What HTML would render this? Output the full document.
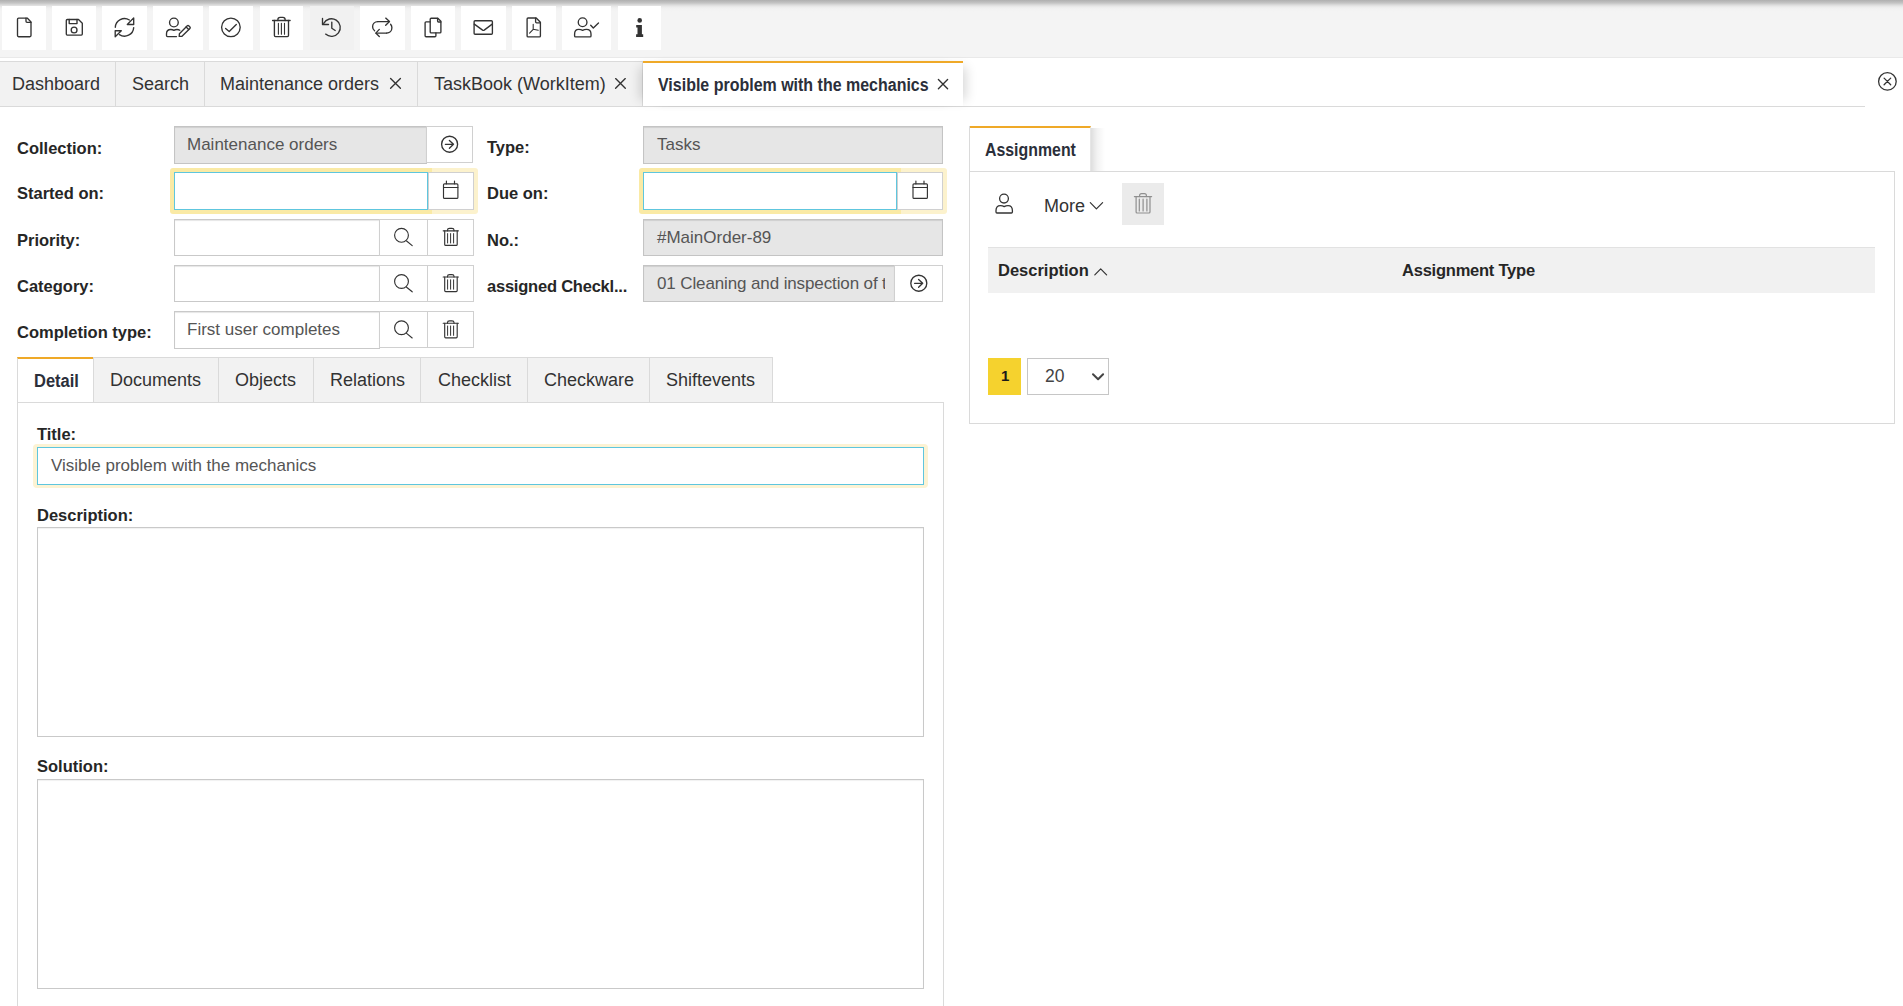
<!DOCTYPE html>
<html><head><meta charset="utf-8">
<style>
*{box-sizing:border-box;margin:0;padding:0}
html,body{width:1903px;height:1006px;overflow:hidden;background:#fff;font-family:"Liberation Sans",sans-serif;color:#333}
div{position:absolute}
.t{white-space:nowrap;line-height:1}
#toolbar{left:0;top:0;width:1903px;height:58px;background:#f4f4f4;border-bottom:1px solid #e9e9e9}
#shadow{left:0;top:0;width:1903px;height:14px;background:linear-gradient(#afafaf 0px,#b6b6b6 1px,#c4c4c4 3px,#dcdcdc 5px,#ececec 7px,#f2f2f2 9px,#f4f4f4 12px)}
.tb{top:6px;height:44px;background:#fff}
.tab{top:61px;height:46px;background:#f2f2f2;border:1px solid #dadada;border-right:none}
.tabtxt{font-size:18px;color:#333}
.lbl{font-weight:700;font-size:16.5px;color:#262626;white-space:nowrap;line-height:1}
.inp{height:38px;border:1px solid #c9c9c9;background:#fff;box-shadow:inset 0 1px 1px rgba(0,0,0,.10)}
.dis{background:#e6e6e6;border-color:#c4c4c4}
.btn{border:1px solid #d0d0d0;background:#fff}
.itxt{font-size:17px;color:#555;white-space:nowrap;line-height:1}
.glow{background:#faeaa5;border-radius:3px 0 0 3px}
.glow2{background:#fcf2cd;border-radius:0 3px 3px 0}
.foc{border:1px solid #5ec6de;box-shadow:none}
.dtab{top:357px;height:46px;background:#f2f2f2;border:1px solid #dadada;border-right:none}
.ta{border:1px solid #c9c9c9;background:#fff;box-shadow:inset 0 1px 1px rgba(0,0,0,.06)}
svg{position:absolute;left:0;top:0}
</style></head><body>
<div id="toolbar"></div>
<div id="shadow"></div>
<div class="tb" style="left:2px;width:44px"></div>
<div class="tb" style="left:52px;width:44px"></div>
<div class="tb" style="left:102px;width:45px"></div>
<div class="tb" style="left:153px;width:50px"></div>
<div class="tb" style="left:209px;width:44px"></div>
<div class="tb" style="left:260px;width:43px"></div>
<div class="tb" style="left:310px;width:44px;background:#f1f1f1"></div>
<div class="tb" style="left:360px;width:45px"></div>
<div class="tb" style="left:411px;width:44px"></div>
<div class="tb" style="left:461px;width:45px"></div>
<div class="tb" style="left:512px;width:44px"></div>
<div class="tb" style="left:562px;width:49px"></div>
<div class="tb" style="left:618px;width:43px"></div>

<!-- top tabs -->
<div class="tab" style="left:-1px;width:117px"></div>
<div class="tab" style="left:115px;width:90px"></div>
<div class="tab" style="left:204px;width:214px"></div>
<div class="tab" style="left:417px;width:226px;border-right:1px solid #dadada"></div>
<div style="left:0;top:106px;width:1865px;height:1px;background:#dadada"></div>
<div style="left:643px;top:61px;width:320px;height:45px;background:#fff;border-top:2px solid #efa928;box-shadow:9px 0 12px -6px rgba(0,0,0,.16),-9px 0 12px -6px rgba(0,0,0,.16)"></div>
<div class="t tabtxt" style="left:12px;top:75px">Dashboard</div>
<div class="t tabtxt" style="left:132px;top:75px">Search</div>
<div class="t tabtxt" style="left:220px;top:75px">Maintenance orders</div>
<div class="t tabtxt" style="left:434px;top:75px">TaskBook (WorkItem)</div>
<div class="t" style="left:658px;top:76px;font-size:18px;font-weight:700;transform:scaleX(0.888);transform-origin:0 0;color:#2b2f3a">Visible problem with the mechanics</div>

<!-- form left labels -->
<div class="lbl" style="left:17px;top:140px">Collection:</div>
<div class="lbl" style="left:17px;top:185px">Started on:</div>
<div class="lbl" style="left:17px;top:232px">Priority:</div>
<div class="lbl" style="left:17px;top:278px">Category:</div>
<div class="lbl" style="left:17px;top:324px">Completion type:</div>
<div class="lbl" style="left:487px;top:139px">Type:</div>
<div class="lbl" style="left:487px;top:185px">Due on:</div>
<div class="lbl" style="left:487px;top:232px">No.:</div>
<div class="lbl" style="left:487px;top:278px;letter-spacing:-0.22px">assigned Checkl...</div>

<!-- left inputs -->
<div class="inp dis" style="left:174px;top:126px;width:253px;height:38px"></div>
<div class="btn" style="left:426px;top:126px;width:47px;height:37px"></div>
<div class="t itxt" style="left:187px;top:136px">Maintenance orders</div>

<div class="glow2" style="left:426px;top:168px;width:52px;height:46px"></div>
<div class="glow" style="left:170px;top:168px;width:262px;height:46px"></div>
<div class="inp foc" style="left:174px;top:172px;width:254px;height:38px"></div>
<div class="btn" style="left:428px;top:172px;width:46px;height:38px"></div>

<div class="inp" style="left:174px;top:219px;width:206px;height:37px"></div>
<div class="btn" style="left:379px;top:219px;width:49px;height:37px"></div>
<div class="btn" style="left:427px;top:219px;width:47px;height:37px"></div>

<div class="inp" style="left:174px;top:265px;width:206px;height:37px"></div>
<div class="btn" style="left:379px;top:265px;width:49px;height:37px"></div>
<div class="btn" style="left:427px;top:265px;width:47px;height:37px"></div>

<div class="inp" style="left:174px;top:311px;width:206px;height:38px"></div>
<div class="btn" style="left:379px;top:311px;width:49px;height:37px"></div>
<div class="btn" style="left:427px;top:311px;width:47px;height:37px"></div>
<div class="t itxt" style="left:187px;top:321px">First user completes</div>

<!-- right inputs -->
<div class="inp dis" style="left:643px;top:126px;width:300px;height:38px"></div>
<div class="t itxt" style="left:657px;top:136px">Tasks</div>

<div class="glow2" style="left:895px;top:168px;width:52px;height:46px"></div>
<div class="glow" style="left:639px;top:168px;width:262px;height:46px"></div>
<div class="inp foc" style="left:643px;top:172px;width:254px;height:38px"></div>
<div class="btn" style="left:897px;top:172px;width:46px;height:38px"></div>

<div class="inp dis" style="left:643px;top:219px;width:300px;height:37px"></div>
<div class="t itxt" style="left:657px;top:229px">#MainOrder-89</div>

<div class="inp dis" style="left:643px;top:265px;width:252px;height:37px;overflow:hidden"><div class="t itxt" style="left:13px;top:9px;width:228px;overflow:hidden;letter-spacing:-0.12px">01 Cleaning and inspection of the</div></div>
<div class="btn" style="left:894px;top:265px;width:49px;height:37px"></div>

<!-- detail tabs -->
<div style="left:17px;top:402px;width:927px;height:620px;border:1px solid #dadada;background:#fff"></div>
<div class="dtab" style="left:93px;width:126px"></div>
<div class="dtab" style="left:218px;width:96px"></div>
<div class="dtab" style="left:313px;width:108px"></div>
<div class="dtab" style="left:420px;width:108px"></div>
<div class="dtab" style="left:527px;width:123px"></div>
<div class="dtab" style="left:649px;width:124px;border-right:1px solid #dadada"></div>
<div style="left:17px;top:357px;width:76px;height:46px;background:#fff;border-left:1px solid #dadada;border-top:2px solid #efa928;border-bottom:1px solid #dadada"></div>
<div class="t" style="left:34px;top:372px;font-size:18px;font-weight:700;transform:scaleX(0.915);transform-origin:0 0;color:#2b2f3a">Detail</div>
<div class="t tabtxt" style="left:110px;top:371px">Documents</div>
<div class="t tabtxt" style="left:235px;top:371px">Objects</div>
<div class="t tabtxt" style="left:330px;top:371px">Relations</div>
<div class="t tabtxt" style="left:438px;top:371px">Checklist</div>
<div class="t tabtxt" style="left:544px;top:371px">Checkware</div>
<div class="t tabtxt" style="left:666px;top:371px">Shiftevents</div>

<div class="lbl" style="left:37px;top:426px">Title:</div>
<div style="left:33px;top:444px;width:895px;height:44px;background:#fcf3d4;border-radius:4px"></div>
<div class="inp foc" style="left:37px;top:447px;width:887px;height:38px"></div>
<div class="t itxt" style="left:51px;top:457px">Visible problem with the mechanics</div>
<div class="lbl" style="left:37px;top:507px">Description:</div>
<div class="ta" style="left:37px;top:527px;width:887px;height:210px"></div>
<div class="lbl" style="left:37px;top:758px">Solution:</div>
<div class="ta" style="left:37px;top:779px;width:887px;height:210px"></div>

<!-- right panel -->
<div style="left:969px;top:171px;width:926px;height:253px;border:1px solid #dadada;background:#fff"></div>
<div style="left:1091px;top:128px;width:16px;height:43px;background:linear-gradient(to right,rgba(0,0,0,.13),rgba(0,0,0,.05) 6px,rgba(0,0,0,0) 14px)"></div>
<div style="left:970px;top:126px;width:121px;height:45px;background:#fff;border-top:2px solid #efa928;border-right:1px solid #e6e6e6"></div>
<div style="left:969px;top:126px;width:1px;height:46px;background:#dadada"></div>
<div style="left:969px;top:171px;width:926px;height:1px;background:#dadada"></div>
<div class="t" style="left:985px;top:141px;font-size:18px;font-weight:700;transform:scaleX(0.882);transform-origin:0 0;color:#2b2f3a">Assignment</div>
<div class="t" style="left:1044px;top:197px;font-size:18px;color:#333">More</div>
<div style="left:1122px;top:183px;width:42px;height:42px;background:#ebebeb"></div>
<div style="left:988px;top:247px;width:887px;height:46px;background:#f1f1f1;border-top:1px solid #e2e2e2"></div>
<div class="lbl" style="left:998px;top:262px">Description</div>
<div class="lbl" style="left:1402px;top:262px;letter-spacing:-0.23px">Assignment Type</div>
<div style="left:988px;top:358px;width:33px;height:37px;background:#f5d22e"></div>
<div class="t" style="left:1001px;top:368px;font-size:15px;font-weight:700;color:#1a1a1a">1</div>
<div style="left:1027px;top:358px;width:82px;height:37px;border:1px solid #c6c6c6;background:#fff"></div>
<div class="t" style="left:1045px;top:368px;font-size:17.5px;color:#444">20</div>

<svg width="1903" height="1006" viewBox="0 0 1903 1006" fill="none" stroke="#333" stroke-width="1.35" stroke-linecap="round" stroke-linejoin="round">
<!-- 1 file -->
<path d="M18.6 18.1 H27.2 L31 21.9 V35.6 Q31 36.7 29.9 36.7 H18.6 Q17.5 36.7 17.5 35.6 V19.2 Q17.5 18.1 18.6 18.1 Z"/>
<path d="M26 18.1 V21.3 Q26 22.3 27 22.3 H31"/>
<!-- 2 save -->
<path d="M67.3 19.5 H78.5 L82.3 23.2 V34.1 Q82.3 35.1 81.3 35.1 H67.3 Q66.3 35.1 66.3 34.1 V20.5 Q66.3 19.5 67.3 19.5 Z"/>
<path d="M69.2 19.5 V23.6 H77 V19.5"/>
<circle cx="74.1" cy="30" r="2.9"/>
<!-- 3 sync -->
<path d="M115.3 27.3 A9.2 9.2 0 0 1 129.4 20"/>
<path d="M133.7 17.9 V24.5 H127.3 Z"/>
<path d="M133.7 27.6 A9.2 9.2 0 0 1 119.4 34.6"/>
<path d="M115.2 30.7 H121.3 L115.2 36.7 Z"/>
<!-- 4 user edit -->
<circle cx="173.9" cy="22.45" r="4.35"/>
<path d="M176.5 36.6 H167.5 Q166.5 36.6 166.5 35.6 V33.8 Q166.5 29.5 170.8 29.5 Q172.6 29.5 173.9 30.4 Q175.2 29.5 177 29.5 Q178.7 29.5 179.8 30.2"/>
<path d="M179.2 36.4 L179.4 33.7 L187.3 25.8 Q188 25.1 188.7 25.8 L189.9 27 Q190.6 27.7 189.9 28.4 L182 36.3 Z"/>
<path d="M186.1 27 L188.7 29.6"/>
<!-- 5 check circle -->
<circle cx="230.9" cy="27.35" r="9.3"/>
<path d="M225.6 28.4 L229.2 31.5 L236.3 24.4"/>
<!-- 6 trash -->
<path d="M272.6 20.5 H290.1"/>
<path d="M277.9 20.5 V19.6 Q277.9 17.4 280.1 17.4 H282.9 Q285.1 17.4 285.1 19.6 V20.5"/>
<path d="M274.4 20.5 V35.5 Q274.4 36.6 275.5 36.6 H287.4 Q288.5 36.6 288.5 35.5 V20.5"/>
<path d="M278.4 23.2 V34.3 M281.4 23.2 V34.3 M284.5 23.2 V34.3" stroke-width="1.1"/>
<!-- 7 history -->
<path d="M325.6 34.1 A8.8 8.8 0 1 0 323.7 23.4"/>
<path d="M322.5 18.4 V24.5 H328.5"/>
<path d="M331.8 22.1 V28.3 L335.2 30.5"/>
<!-- 8 repeat -->
<path d="M377.8 21.6 H389.4"/>
<path d="M385.7 18.1 L389.5 21.6 L385.7 25.2"/>
<path d="M377.8 21.6 C374.6 21.6 372.6 24 372.6 26.8 C372.6 28.5 373.4 29.9 374.6 30.8"/>
<path d="M376 33.1 H386.6"/>
<path d="M379.3 29.4 L375.8 33.1 L379.3 36.6"/>
<path d="M386.6 33.1 C389.8 33.1 391.9 30.6 391.9 27.8 C391.9 26.3 391.4 25.1 390.6 24.2"/>
<!-- 9 copy -->
<path d="M431.2 18.2 H437.8 L440.9 21.3 V31.9 Q440.9 32.9 439.9 32.9 H431.2 Q430.2 32.9 430.2 31.9 V19.2 Q430.2 18.2 431.2 18.2 Z"/>
<path d="M437.6 18.3 V21.1 Q437.6 22 438.5 22 H440.8"/>
<path d="M430.2 21.8 H426.1 Q425.1 21.8 425.1 22.8 V35.7 Q425.1 36.7 426.1 36.7 H434.9 Q435.9 36.7 435.9 35.7 V32.9"/>
<!-- 10 mail -->
<rect x="474.1" y="20.7" width="18.3" height="13.5" rx="1"/>
<path d="M474.3 24.1 L482.6 30.1 Q483.4 30.6 484.2 30.1 L492.2 24.1"/>
<!-- 11 pdf -->
<path d="M528.1 18 H536.2 L540.4 22.2 V35.9 Q540.4 36.9 539.4 36.9 H528.1 Q527.1 36.9 527.1 35.9 V19 Q527.1 18 528.1 18 Z"/>
<path d="M535.6 18.1 V21.8 Q535.6 22.8 536.6 22.8 H540.3"/>
<path d="M533.2 24.3 V29.3 L529.6 33.1 M533.2 29.3 L538.3 30.2" stroke-width="1.1"/>
<!-- 12 user check -->
<circle cx="582.6" cy="22.2" r="4.35"/>
<path d="M575.6 36.9 H590 Q591 36.9 591 35.9 V34 Q591 29.4 586.4 29.4 Q584.3 29.4 582.6 30.3 Q580.9 29.4 578.8 29.4 Q574.6 29.4 574.6 34 V35.9 Q574.6 36.9 575.6 36.9 Z"/>
<path d="M590.7 25.2 L593.3 28 L598.5 23"/>
<!-- 13 info -->
<circle cx="639.7" cy="20.4" r="2.3" fill="#333" stroke="none"/>
<path d="M636.2 25.1 H641.9 V34.2 H643.2 V37 H636.1 V34.2 H637.5 V27.5 H636.2 Z" fill="#333" stroke="none"/>

<!-- tab close x -->
<path d="M390.6 78.4 L400.4 88.2 M400.4 78.4 L390.6 88.2" stroke-width="1.35"/>
<path d="M615.6 78.6 L625.3 88.2 M625.3 78.6 L615.6 88.2" stroke-width="1.35"/>
<path d="M938.4 79.5 L947.6 88.7 M947.6 79.5 L938.4 88.7" stroke-width="1.35"/>
<circle cx="1887.4" cy="81.4" r="8.8" stroke-width="1.3"/>
<path d="M1884.1 78.1 L1890.7 84.7 M1890.7 78.1 L1884.1 84.7" stroke-width="1.3"/>

<!-- arrow circles -->
<circle cx="449.6" cy="144.2" r="8"/>
<path d="M445.4 144.3 H453.5 M449.4 140.4 L453.5 144.3 L449.4 148.2"/>
<circle cx="918.8" cy="283.2" r="8"/>
<path d="M914.6 283.3 H922.7 M918.6 279.4 L922.7 283.3 L918.6 287.2"/>

<!-- calendars -->
<g stroke-width="1.15">
<rect x="443.5" y="183.8" width="14.4" height="14.6" rx="1"/>
<path d="M443.5 187.5 H457.9 M446.4 181 V183.8 M454.5 181 V183.8"/>
</g>
<g stroke-width="1.15"><rect x="913" y="183.8" width="14.4" height="14.6" rx="1"/>
<path d="M913 187.5 H927.4 M915.9 181 V183.8 M924 181 V183.8"/></g>
<g stroke-width="1.15">
<circle cx="401.5" cy="235.3" r="6.9"/>
<path d="M406.6 241.0 L412.2 245.6"/>
<path d="M443.2 230.8 H458.4"/>
<path d="M447.5 230.8 V230.0 Q447.5 228.4 449.5 228.4 H452 Q454 228.4 454 230.0 V230.8"/>
<path d="M444.7 230.8 V244.4 Q444.7 245.4 445.7 245.4 H456.2 Q457.2 245.4 457.2 244.4 V230.8"/>
<path d="M447.6 233.6 V243.0 M450.6 233.6 V243.0 M453.6 233.6 V243.0" stroke-width="1.0"/>
<circle cx="401.5" cy="281.5" r="6.9"/>
<path d="M406.6 287.2 L412.2 291.8"/>
<path d="M443.2 277.0 H458.4"/>
<path d="M447.5 277.0 V276.2 Q447.5 274.6 449.5 274.6 H452 Q454 274.6 454 276.2 V277.0"/>
<path d="M444.7 277.0 V290.6 Q444.7 291.6 445.7 291.6 H456.2 Q457.2 291.6 457.2 290.6 V277.0"/>
<path d="M447.6 279.8 V289.2 M450.6 279.8 V289.2 M453.6 279.8 V289.2" stroke-width="1.0"/>
<circle cx="401.5" cy="327.7" r="6.9"/>
<path d="M406.6 333.4 L412.2 338.0"/>
<path d="M443.2 323.2 H458.4"/>
<path d="M447.5 323.2 V322.4 Q447.5 320.8 449.5 320.8 H452 Q454 320.8 454 322.4 V323.2"/>
<path d="M444.7 323.2 V336.8 Q444.7 337.8 445.7 337.8 H456.2 Q457.2 337.8 457.2 336.8 V323.2"/>
<path d="M447.6 326.0 V335.4 M450.6 326.0 V335.4 M453.6 326.0 V335.4" stroke-width="1.0"/>

</g>
<!-- person -->
<circle cx="1004" cy="198.6" r="4.4" stroke-width="1.3"/>
<path d="M997 213 H1011.4 Q1012.4 213 1012.4 212 V210.6 Q1012.4 205.6 1008 205.6 Q1005.8 205.6 1004.2 206.6 Q1002.6 205.6 1000.4 205.6 Q996 205.6 996 210.6 V212 Q996 213 997 213 Z" stroke-width="1.3"/>
<path d="M1090.3 202.6 L1096.4 208.8 L1102.6 202.6" stroke-width="1.2"/>
<g stroke="#8f8f8f" stroke-width="1.2">
<path d="M1134.4 196.6 H1151.6"/>
<path d="M1139.6 196.6 V195.6 Q1139.6 193.6 1141.6 193.6 H1144.4 Q1146.4 193.6 1146.4 195.6 V196.6"/>
<path d="M1136.1 196.6 V212 Q1136.1 213 1137.1 213 H1149 Q1150 213 1150 212 V196.6"/>
<path d="M1139.3 199.2 V211 M1143.1 199.2 V211 M1146.9 199.2 V211"/>
</g>
<path d="M1094.8 274.8 L1100.7 268.9 L1106.6 274.8" stroke-width="1.2"/>
<path d="M1093 374.2 L1098.1 379.2 L1103.1 374.2" stroke="#444" stroke-width="2"/>
</svg>
</body></html>
